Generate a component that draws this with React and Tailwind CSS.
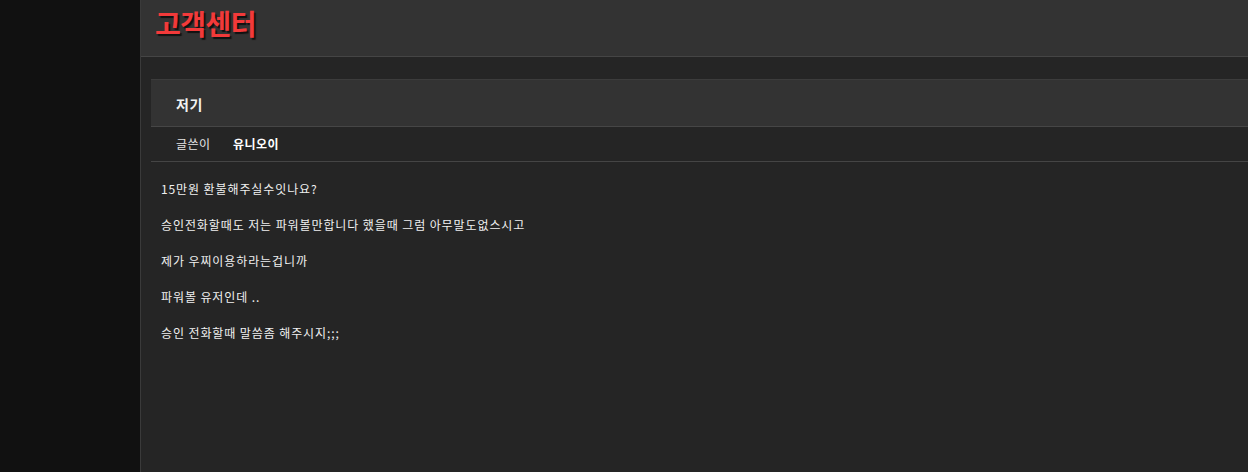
const lines = [
    "15만원 환불해주실수잇나요?",
    "승인전화할때도 저는 파워볼만합니다 했을때 그럼 아무말도없스시고",
    "제가 우찌이용하라는겁니까",
    "파워볼 유저인데 ..",
    "승인 전화할때 말씀좀 해주시지;;;",
];

const App = () => {
    return (
        <div
            className="flex h-[472px] w-full overflow-hidden bg-[#252525] text-white"
            style={{ fontFamily: '"Noto Sans CJK KR", "Noto Sans", sans-serif' }}
        >
            {/* sidebar */}
            <div className="w-[141px] shrink-0 bg-[#111111] border-r border-[#3a3a3a]"></div>

            <div className="flex-1 flex flex-col min-w-0">
                {/* header */}
                <div className="h-[57px] shrink-0 bg-[#333333] border-b border-[#454545] pl-[14px] pt-[3px]">
                    <h1 className="text-[28px] leading-[40px] font-bold tracking-[-0.5px] text-[#f23a3a] [text-shadow:2px_2px_1px_#111]">
                        고객센터
                    </h1>
                </div>

                {/* post */}
                <div className="pl-[10px] pt-[22px]">
                    <div className="border-t border-[#3c3c3c]">
                        <div className="h-[47px] bg-[#333333] border-b border-[#464646] flex items-center pt-[3px] pl-[25px]">
                            <span className="text-[14px] font-bold tracking-[0.5px] text-[#f2f2f2]">저기</span>
                        </div>
                        <div className="h-[35px] border-b border-[#454545] flex items-center pl-[25px] text-[12px] tracking-[0.5px]">
                            <span className="text-[#e5e5e5] w-[57px]">글쓴이</span>
                            <span className="font-bold text-white">유니오이</span>
                        </div>
                        <div className="pl-[10px] pt-[18px] flex flex-col gap-[18px] text-[12px] leading-[18px] tracking-[0.9px] text-[#f0f0f0]">
                            {lines.map((line, idx) => (
                                <p key={idx}>{line}</p>
                            ))}
                        </div>
                    </div>
                </div>
            </div>
        </div>
    );
};

export default App;
